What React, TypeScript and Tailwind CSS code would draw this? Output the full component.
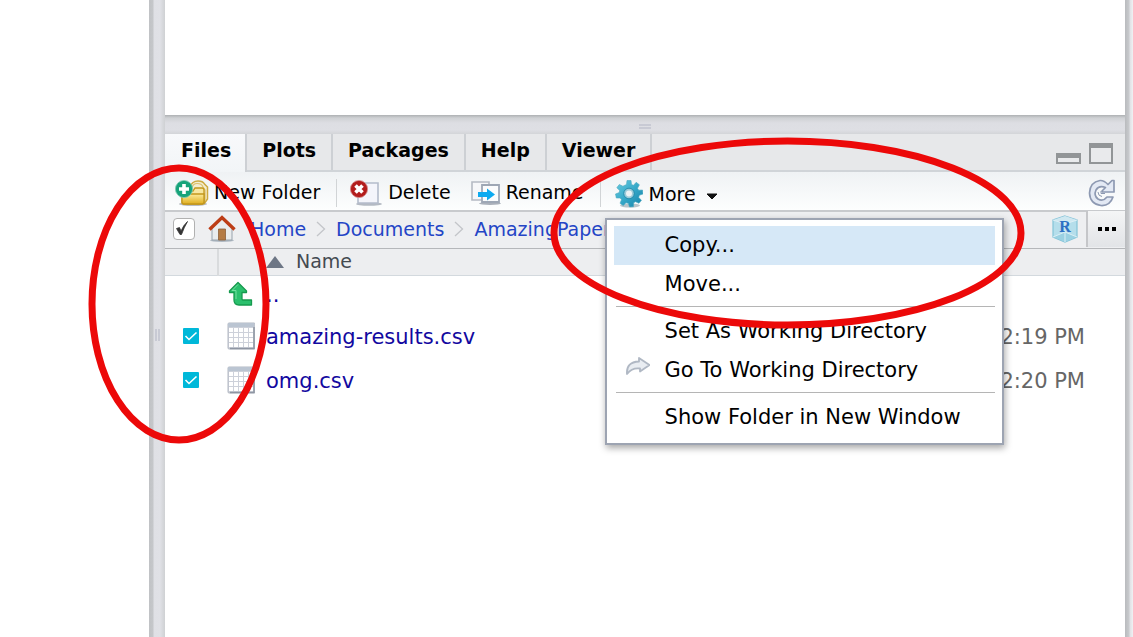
import { Fragment, useState } from "react";

const tabs = ["Files", "Plots", "Packages", "Help", "Viewer"];
const crumbs = ["Home", "Documents", "AmazingPaper"];
const files = [
  { name: "amazing-results.csv", time: "12:19 PM" },
  { name: "omg.csv", time: "12:20 PM" },
];

function NewFolderIcon() {
  return (
    <svg width="34" height="28" viewBox="0 0 34 28" aria-hidden="true">
      <defs>
        <linearGradient id="folder" x1="0" y1="0" x2="0" y2="1">
          <stop offset="0" stopColor="#fbeb9c" />
          <stop offset="1" stopColor="#e0ae1e" />
        </linearGradient>
      </defs>
      <ellipse cx="18" cy="25" rx="14" ry="2" fill="#b9bdc4" />
      <path d="M15 12 Q15 6 18 3.500 Q20 2 23 2 Q28 2 29.500 5 L32.500 8 V20 L29 25" fill="#f3ecd0" stroke="#cda93f" strokeWidth="1.500" />
      <path d="M17 9 Q18 4.500 22 4.500 Q27 4.500 28 8 L30 11 V22" fill="none" stroke="#dcc06a" strokeWidth="1.200" />
      <path d="M7 12 H18 L20 9 H27 Q29 9 29 11 V23 Q29 25 27 25 H9 Q7 25 7 23 Z" fill="#f7e7a2" stroke="#c2971d" strokeWidth="1.300" />
      <path d="M7 15 H29 V23 Q29 25 27 25 H9 Q7 25 7 23 Z" fill="url(#folder)" stroke="#c2971d" strokeWidth="1.300" />
      <circle cx="9" cy="10" r="8.600" fill="#16a37a" stroke="#7fc9b2" strokeWidth=".8" />
      <path d="M9 5 V15 M4 10 H14" stroke="#fff" strokeWidth="3.600" />
    </svg>
  );
}

function DeleteIcon() {
  return (
    <svg width="34" height="28" viewBox="0 0 34 28" aria-hidden="true">
      <ellipse cx="20" cy="25" rx="13" ry="1.800" fill="#b4bac3" />
      <path d="M9 4 H29 V24 H9 Z" fill="#f4f5fb" stroke="#b4bccb" strokeWidth="1.600" />
      <circle cx="10" cy="10" r="8.600" fill="#b31c1c" stroke="#d48a8a" strokeWidth=".8" />
      <path d="M6.500 6.500 L13.500 13.500 M13.500 6.500 L6.500 13.500" stroke="#fff" strokeWidth="3.600" />
    </svg>
  );
}

function RenameIcon() {
  return (
    <svg width="30" height="26" viewBox="0 0 30 26" aria-hidden="true">
      <ellipse cx="19" cy="23.500" rx="11" ry="1.500" fill="#aab0ba" />
      <path d="M1 2 H18 V20 H1 Z" fill="#f6f7f9" stroke="#b5bac3" strokeWidth="1.600" />
      <path d="M11 5 H28 V22 H11 Z" fill="#fbfcfd" stroke="#9ea7b5" strokeWidth="1.800" />
      <path d="M7 12 H16 V8.500 L24 14.500 L16 20.500 V17 H7 Z" fill="#0daaf0" />
    </svg>
  );
}

function GearIcon() {
  return (
    <svg width="28" height="28" viewBox="0 0 28 28" aria-hidden="true">
      <defs>
        <linearGradient id="gear" x1="0" y1="0" x2="1" y2="1">
          <stop offset="0" stopColor="#6acbe0" />
          <stop offset=".5" stopColor="#36a9c9" />
          <stop offset="1" stopColor="#1681a8" />
        </linearGradient>
      </defs>
      <ellipse cx="15" cy="25.500" rx="10" ry="2" fill="#b8c4ca" />
      <path
        d="M11.500 4.500 L12 .5 H16 L16.500 4.500 L18.500 5.300 L21.200 2.300 L24.400 4.800 L22.500 8.300 L23.700 10.200 L27.600 10 L28 14 L24.300 15.300 L23.700 17.500 L26.500 20.200 L24 23.300 L20.500 21.700 L18.700 22.800 L18.500 26.700 L14.500 27 L13.300 23.300 L11 22.800 L8.200 25.600 L5 23.300 L6.500 19.700 L5.200 18 L1.300 18 L.5 14 L4.200 12.600 L4.700 10.400 L1.800 7.700 L4.300 4.500 L7.900 6.200 Z"
        fill="url(#gear)" stroke="#4ba9c0" strokeWidth=".6"
      />
      <circle cx="14" cy="13.500" r="4" fill="#edf2f4" stroke="#9ccbd9" strokeWidth="2" />
      <circle cx="14" cy="13.500" r="5.300" fill="none" stroke="#2789a8" strokeWidth=".8" />
    </svg>
  );
}

function HomeIcon() {
  return (
    <svg width="28" height="28" viewBox="0 0 28 28" aria-hidden="true">
      <ellipse cx="14" cy="25.500" rx="12" ry="1.500" fill="#aeb8c2" />
      <path d="M4 13 L14 4 L24 13 V25 H4 Z" fill="#e9ecee" stroke="#98a3ad" strokeWidth="1" />
      <path d="M10.500 14 H17.500 V25 H10.500 Z" fill="#b47b45" stroke="#8d603a" strokeWidth=".8" />
      <path d="M1.500 14.500 L14 2.500 L26.500 14.500" fill="none" stroke="#bd3d16" strokeWidth="3.400" />
    </svg>
  );
}

function RefreshIcon() {
  return (
    <svg width="28" height="28" viewBox="0 0 28 28" aria-hidden="true">
      <path
        d="M20 5.500 L24 1.500 H26 V13 H14.500 L14 12 L17.500 8.500 Q11 6 8 11 Q5.500 16.500 10 20 Q15 23 19 18 H25 Q22 27 13 26.500 Q2 25 1.500 14 Q2 3 12 1.500 Q16 1.200 20 5.500 Z"
        fill="#e3e9f4" stroke="#8d99b2" strokeWidth="1.700" strokeLinejoin="round"
      />
      <path d="M10 13 Q10 17 14 17.500 M13 12 V14.500 H17" fill="none" stroke="#8d99b2" strokeWidth="1" />
    </svg>
  );
}

function ProjectIcon() {
  return (
    <svg width="26" height="28" viewBox="0 0 26 28" aria-hidden="true">
      <path d="M13 1 L25 5 V22 L13 27 L1 22 V5 Z" fill="#b5deeb" stroke="#83c3d8" strokeWidth="1.200" />
      <path d="M1 5 L13 9 L25 5 L13 1 Z" fill="#cfe8f1" />
      <path d="M13 17 L1 22 L13 27 L25 22 Z" fill="#9bd1e2" />
      <path d="M1 5 L13 9 L25 5 M13 9 V27 M1 22 L13 17 L25 22" fill="none" stroke="#dceff5" strokeWidth="1" />
      <text x="13" y="17" textAnchor="middle" fontFamily="Liberation Serif, serif" fontWeight="bold" fontSize="16" fill="#2e71c4">R</text>
    </svg>
  );
}

function UpIcon() {
  return (
    <svg width="26" height="26" viewBox="0 0 26 26" className="block" aria-hidden="true">
      <path d="M10 1.500 L18.500 10 V11.500 H14 V18 Q14 19 15 19 H23.500 V24 H11 Q6 24 6 19 V11.500 H1.500 V10 Z" fill="#2bc06d" stroke="#169a4e" strokeWidth="1.300" strokeLinejoin="round" />
      <path d="M10 3.500 L4 9.500 H8 V18" fill="none" stroke="#74dfa0" strokeWidth="1" />
    </svg>
  );
}

function SheetIcon() {
  return (
    <svg width="28" height="28" viewBox="0 0 28 28" className="block" aria-hidden="true">
      <rect x="1" y="1" width="27" height="26" rx="1" fill="#cdd1da" stroke="#b3b8c2" />
      <rect x="1" y="1" width="26" height="4" fill="#bbc5d2" />
      <path d="M27 5 V26.500 H3" fill="none" stroke="#8f96a3" strokeWidth="1.500" />
      {[6, 11, 16, 21].map((y) =>
        [2, 7, 12, 17, 22].map((x) => <rect key={`${x}-${y}`} x={x} y={y} width="4" height="4" fill="#fff" />),
      )}
    </svg>
  );
}

function GoIcon() {
  return (
    <svg width="24" height="18" viewBox="0 0 24 18" aria-hidden="true">
      <path d="M1 17 Q0 5 13 4.500 V1 L23.500 8 L14 14.500 V11.500 Q6 10.500 1 17 Z" fill="#e9edf2" stroke="#b0b8c4" strokeWidth="1.800" strokeLinejoin="round" />
    </svg>
  );
}

function Chevron() {
  return (
    <svg width="10" height="16" viewBox="0 0 10 16" className="mx-[10px]" aria-hidden="true">
      <path d="M1 1 L8.500 8 L1 15" fill="none" stroke="#c3c5c9" strokeWidth="1.300" />
    </svg>
  );
}

function FileCheck({ label }: { label: string }) {
  return (
    <label className="grid w-4">
      <input type="checkbox" defaultChecked aria-label={label} className="peer col-start-1 row-start-1 size-4 appearance-none rounded-[1px] border-2 border-[#00b8d9] checked:bg-[#00b8d9]" />
      <svg viewBox="0 0 16 16" className="pointer-events-none invisible col-start-1 row-start-1 size-4 peer-checked:visible" aria-hidden="true">
        <path d="M2.500 8 L6 11.500 L13.500 4.500" fill="none" stroke="#fff" strokeWidth="1.600" />
      </svg>
    </label>
  );
}

function MenuItem({ children, icon, active }: { children: string; icon?: boolean; active?: boolean }) {
  return (
    <button role="menuitem" className={`flex h-[39px] w-full items-center whitespace-nowrap text-left text-[21px] ${active ? "bg-[#d6e8f7]" : "bg-white"}`}>
      <span className="flex w-[51px] shrink-0 pb-2 pl-3">{icon && <GoIcon />}</span>
      {children}
    </button>
  );
}

function Rule() {
  return <hr className="mt-0.5 mb-[5px] ml-0.5 border-[#b5b5b5]" />;
}

export default function App() {
  const [tab, setTab] = useState("Files");
  return (
    <div className="relative flex min-h-screen overflow-hidden bg-white font-['DejaVu_Sans',sans-serif] text-black">
      <aside className="w-[149px] shrink-0" />
      <div className="flex w-4 shrink-0 items-center justify-center bg-[linear-gradient(90deg,#c0c2c5_0,#c5c7ca_4px,#dfe0e5_5px,#e0e1e6_11px,#d2d4d7_15px,#cfd1d3_16px)]">
        <div className="mt-8 h-3 w-[5px] border-x-2 border-[#c8cad4]" />
      </div>

      <main className="flex min-w-0 flex-1 flex-col">
        <section className="h-[115px] shrink-0 bg-white" />
        <div className="flex h-[19px] shrink-0 items-center justify-center bg-[linear-gradient(#aeb1b3_0,#cfd1d4_3px,#dddee3_8px,#dedfe4_15px,#d3d5d8_19px)]">
          <div className="mt-1 h-[5px] w-3 border-y-2 border-[#c8cad4]" />
        </div>

        <section className="flex flex-1 flex-col">
          <div className="flex h-[38px] items-start border-b-2 border-[#d0d4d8] bg-[#e7e8ea]">
            <div role="tablist" className="flex h-[38px]">
              {tabs.map((name) => (
                <button
                  key={name}
                  role="tab"
                  aria-selected={tab === name}
                  onClick={() => setTab(name)}
                  className={`flex items-start border-r-2 border-[#cdd0d4] pt-1 text-[19px] leading-6 font-bold ${tab === name ? "h-[38px] bg-linear-to-b from-[#f8f9fb] to-[#f2f5f7] pr-[14px] pl-4" : "h-9 px-[15px]"}`}
                >
                  {name}
                </button>
              ))}
            </div>
            <div className="ml-auto flex items-end gap-2 pt-[9px] pr-3">
              <button aria-label="Minimize pane" className="h-[11px] w-[25px] border-2 border-t-[5px] border-[#929597] bg-[#e9eaec]" />
              <button aria-label="Maximize pane" className="h-[21px] w-6 border-2 border-t-[5px] border-[#929597] bg-[#e9eaec]" />
            </div>
          </div>

          <div className="flex h-10 items-center border-b-2 border-[#c8cacd] bg-linear-to-b from-[#eff2f4] to-[#fdfefe] pt-[3px] pl-[10px] text-[19px] whitespace-nowrap">
            <button className="flex items-center gap-[5px]"><NewFolderIcon />New Folder</button>
            <span className="ml-4 h-7 w-px bg-[#d1d4d6]" />
            <button className="ml-3 flex items-center gap-[5px]"><DeleteIcon />Delete</button>
            <button className="ml-5 flex items-center gap-[5px]"><RenameIcon />Rename</button>
            <span className="ml-4 h-7 w-px bg-[#d1d4d6]" />
            <div className="relative ml-[14px]">
              <button aria-haspopup="menu" aria-expanded="true" className="flex items-center gap-[6px] pt-[3px]">
                <GearIcon />More
                <svg width="12" height="7" viewBox="0 0 12 7" className="mt-1 ml-1" aria-hidden="true">
                  <path d="M1 1 H11 L6 6 Z" fill="#111" stroke="#111" strokeLinejoin="round" />
                </svg>
              </button>
              <div role="menu" className="absolute top-[41px] -left-[10px] z-10 w-[399px] border-2 border-[#9da4b2] bg-white px-[7px] py-[6px] shadow-[1px_3px_7px_rgba(0,0,0,0.35)]">
                <MenuItem active>Copy...</MenuItem>
                <MenuItem>Move...</MenuItem>
                <Rule />
                <MenuItem>Set As Working Directory</MenuItem>
                <MenuItem icon>Go To Working Directory</MenuItem>
                <Rule />
                <MenuItem>Show Folder in New Window</MenuItem>
              </div>
            </div>
            <button aria-label="Refresh" className="mr-[9px] ml-auto"><RefreshIcon /></button>
          </div>

          <div className="flex h-[37px] items-center border-b border-[#b5b7ba] bg-[#eeeff1] pb-0.5 pl-2">
            <label className="grid">
              <input type="checkbox" defaultChecked aria-label="Select all files" className="peer col-start-1 row-start-1 size-[22px] appearance-none rounded-[4px] border border-[#b1b1b1] bg-white" />
              <svg viewBox="0 0 22 22" className="pointer-events-none invisible col-start-1 row-start-1 size-[22px] peer-checked:visible" aria-hidden="true">
                <path d="M3.500 10.500 L6.500 9.500 L8 13 Q10.500 7 14.500 3.500 Q11 9.500 8.500 16.500 H7 Z" fill="#333" stroke="#333" strokeWidth=".8" />
              </svg>
            </label>
            <span className="mr-[14px] ml-[13px]"><HomeIcon /></span>
            <nav className="flex items-center text-[19px] text-[#2445c6]">
              {crumbs.map((crumb, i) => (
                <Fragment key={crumb}>
                  {i > 0 && <Chevron />}
                  <a href="#">{crumb}</a>
                </Fragment>
              ))}
            </nav>
            <button aria-label="Project directory" className="ml-auto"><ProjectIcon /></button>
            <button aria-label="More path options" className="ml-2 flex h-9 w-[39px] items-center justify-center gap-[3px] border-l-2 border-[#c5c6c9] bg-linear-to-b from-[#f4f5f6] to-[#e2e4e7]">
              <span className="size-1 bg-black" />
              <span className="size-1 bg-black" />
              <span className="size-1 bg-black" />
            </button>
          </div>

          <table className="w-full table-fixed border-collapse">
            <thead>
              <tr className="h-[26px] border-b border-[#d3d9de] bg-[#edeef0]">
                <th className="w-[53px] border-r-2 border-[#d9dbdd] p-0" aria-label="Selected" />
                <th className="w-12 p-0" aria-label="Type" />
                <th className="p-0 text-left text-[19px] leading-[25px] font-normal text-[#444a50]">
                  <span className="flex items-center gap-3">
                    <svg width="18" height="12" viewBox="0 0 18 12" aria-hidden="true"><path d="M9 0 L18 12 H0 Z" fill="#6d7685" /></svg>
                    Name
                  </span>
                </th>
                <th className="w-[240px] p-0" aria-label="Modified" />
              </tr>
            </thead>
            <tbody className="text-[21px]">
              <tr className="h-[41px]">
                <td />
                <td className="p-0 pb-1 pl-[10px]"><UpIcon /></td>
                <td className="p-0 text-[#1208a0]"><a href="#">..</a></td>
                <td />
              </tr>
              {files.map((file) => (
                <tr key={file.name} className="h-11">
                  <td className="p-0 pb-1 pl-[18px]"><FileCheck label={file.name} /></td>
                  <td className="p-0 pb-1 pl-[9px]"><SheetIcon /></td>
                  <td className="p-0 text-[#1208a0]"><a href="#">{file.name}</a></td>
                  <td className="p-0 pr-10 text-right text-[#666]">{file.time}</td>
                </tr>
              ))}
            </tbody>
          </table>
        </section>
      </main>

      <div className="w-2 shrink-0 bg-[linear-gradient(90deg,#b9bbbe_0,#c8cacd_4px,#e0e1e5_5px,#f0f1f3_8px)]" />

      <svg width="1133" height="637" viewBox="0 0 1133 637" className="pointer-events-none absolute top-0 left-0 z-20" fill="none" stroke="#ec0909" strokeWidth="7" aria-hidden="true">
        <ellipse cx="179" cy="304" rx="87" ry="136" />
        <ellipse cx="787.500" cy="233" rx="233.500" ry="92" />
      </svg>
    </div>
  );
}
